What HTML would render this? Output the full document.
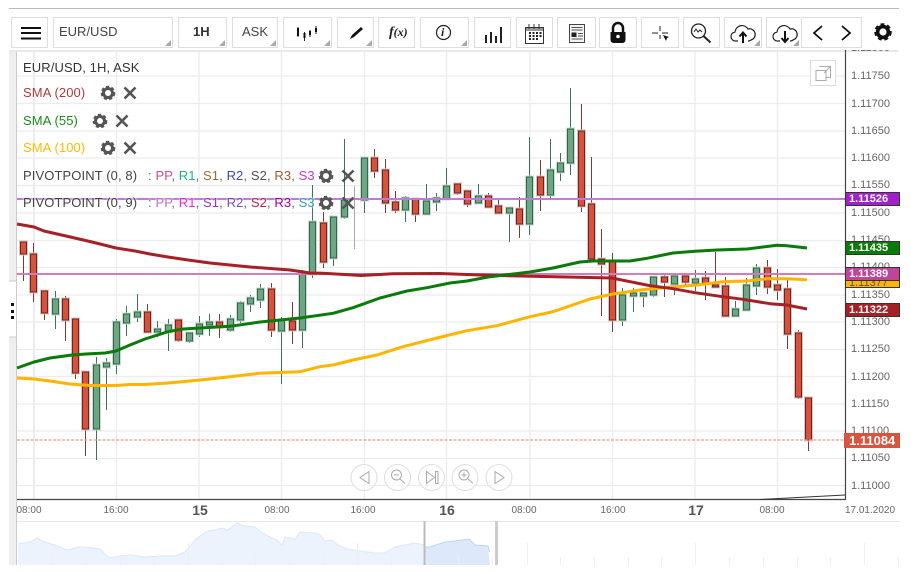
<!DOCTYPE html>
<html>
<head>
<meta charset="utf-8">
<style>
html,body{margin:0;padding:0;background:#fff;width:911px;height:571px;overflow:hidden}
body{position:relative;font-family:"Liberation Sans",sans-serif}
.b{position:absolute;top:17px;height:29px;border:1px solid #ddd;box-sizing:content-box;background:#fff}
.b.c:after{content:"";position:absolute;right:1px;bottom:1px;border-style:solid;border-width:0 0 6px 6px;border-color:transparent transparent #aaa transparent}
.t{position:absolute;white-space:nowrap}
.p{position:absolute;left:851px;font-size:11px;line-height:12px;color:#666;white-space:nowrap}
.x{position:absolute;top:505px;font-size:10px;line-height:12px;color:#666;white-space:nowrap;transform:translateX(-50%)}
.d{position:absolute;top:502px;font-size:14px;font-weight:bold;line-height:16px;color:#555;transform:translateX(-50%)}
.g{position:absolute;left:845px;width:53px;border:1px solid #333;color:#fff;font-size:11px;font-weight:bold;line-height:12px;height:12px;text-indent:3px}
.l{position:absolute;left:23px;font-size:13px;line-height:16px;letter-spacing:.1px;white-space:nowrap;color:#444;text-shadow:0 0 2px #fff,0 0 2px #fff}
.l i{font-style:normal;color:#666}
</style>
</head>
<body>
<div style="position:absolute;left:9px;top:8px;width:890px;height:1px;background:#bbb"></div>

<div class="b" style="left:11px;width:35px"><svg width="35" height="29" style="position:absolute;left:0;top:0"><path d="M9 10h20M9 15h20M9 20.500h20" stroke="#111" stroke-width="2" fill="none"/></svg></div>
<div class="b c" style="left:53px;width:118px"><span class="t" style="left:5px;top:6px;font-size:13px;line-height:16px;color:#444">EUR/USD</span></div>
<div class="b c" style="left:178px;width:47px"><span class="t" style="left:14px;top:6px;font-size:13px;font-weight:bold;line-height:16px;color:#333">1H</span></div>
<div class="b c" style="left:232px;width:44px"><span class="t" style="left:9px;top:6px;font-size:13px;line-height:16px;color:#444">ASK</span></div>
<div class="b c" style="left:283px;width:47px"><svg width="47" height="29" style="position:absolute;left:0;top:0"><path d="M14 9v10M20.500 14v9M26 12v7M32 8v8" stroke="#222" fill="none"/><path d="M13 10h2v8h-2zM19.500 15h2v5h-2zM25 13h2v4h-2zM31 10h2v4h-2z" fill="#111"/></svg></div>
<div class="b c" style="left:337px;width:35px"><svg width="35" height="29" style="position:absolute;left:0;top:0"><path d="M12 21l2-4 9-8 2 2-9 8z" fill="#111"/></svg></div>
<div class="b" style="left:378px;width:35px"><span class="t" style="left:10px;top:6px;font:italic bold 14px/16px 'Liberation Serif',serif;color:#222">f<span style="font-size:12px">(x)</span></span></div>
<div class="b c" style="left:420px;width:47px"><svg width="47" height="29" style="position:absolute;left:0;top:0"><circle cx="22.500" cy="14.500" r="7" fill="none" stroke="#222" stroke-width="1.200"/></svg><span class="t" style="left:20px;top:7px;font:italic bold 12px/14px 'Liberation Serif',serif;color:#222">i</span></div>
<div class="b" style="left:474px;width:35px"><svg width="35" height="29" style="position:absolute;left:0;top:0"><path d="M10 17h2v8h-2zM15 14h2v11h-2zM20 18h2v7h-2zM25 9h2v16h-2z" fill="#222"/></svg></div>
<div class="b" style="left:516px;width:35px"><svg width="35" height="29" style="position:absolute;left:0;top:0"><path d="M8.500 9.500h18v16h-18z" fill="none" stroke="#333"/><path d="M8.500 10h18v2h-18zM12 6v5M17 6v5M22 6v5" stroke="#333" fill="none"/><path d="M12 14h2v2h-2zM15.500 14h2v2h-2zM19 14h2v2h-2zM22.500 14h2v2h-2zM12 17h2v2h-2zM15.500 17h2v2h-2zM19 17h2v2h-2zM22.500 17h2v2h-2zM12 20h2v2h-2zM15.500 20h2v2h-2zM19 20h2v2h-2z" fill="#222"/></svg></div>
<div class="b" style="left:557px;width:37px"><svg width="37" height="29" style="position:absolute;left:0;top:0"><path d="M11.500 6.500h15v18h-15z" fill="#f4f4f4" stroke="#444"/><path d="M13.500 9.500h11M13.500 12h11M20 15.500h5M20 18h5M13.500 21h11" stroke="#555" fill="none"/><path d="M13.500 14.500h5v4.500h-5z" fill="#222"/></svg></div>
<div class="b" style="left:599px;width:36px"><svg width="36" height="29" style="position:absolute;left:0;top:0"><path d="M13 14v-4a5 5 0 0 1 10 0v4" fill="none" stroke="#111" stroke-width="2.500"/><path d="M10.500 14h15v8a3 3 0 0 1-3 3h-9a3 3 0 0 1-3-3z" fill="#111"/><circle cx="18" cy="18.500" r="1.800" fill="#fff"/></svg></div>
<div class="b" style="left:641px;width:36px"><svg width="36" height="29" style="position:absolute;left:0;top:0"><path d="M10 15h6M20 15h6M18 8v5M18 17v4" stroke="#222" fill="none"/><path d="M21 17l6 2-2 1-1 3z" fill="#111"/></svg></div>
<div class="b" style="left:683px;width:35px"><svg width="35" height="29" style="position:absolute;left:0;top:0"><circle cx="14.500" cy="13" r="7" fill="none" stroke="#222" stroke-width="1.300"/><path d="M19.500 18l7 6.500" stroke="#222" stroke-width="2" fill="none"/><path d="M10 14l2-3 2 3 2-2 2 2" stroke="#222" fill="none"/></svg></div>
<div class="b c" style="left:724px;width:36px"><svg width="36" height="29" style="position:absolute;left:0;top:0"><path d="M13 23h-2a4.500 4.500 0 0 1-1-9 7 7 0 0 1 13-3 5.500 5.500 0 0 1 3 11 4 4 0 0 1-3 1" fill="none" stroke="#222" stroke-width="1.200"/><path d="M18 25v-10M14.500 18.500l3.500-4 3.500 4" stroke="#111" stroke-width="2" fill="none"/></svg></div>
<div class="b c" style="left:766px;width:33px;border-right:0"><svg width="33" height="29" style="position:absolute;left:0;top:0"><path d="M13 23h-2a4.500 4.500 0 0 1-1-9 7 7 0 0 1 13-3 5.500 5.500 0 0 1 3 11 4 4 0 0 1-3 1" fill="none" stroke="#222" stroke-width="1.200"/><path d="M18 13v11M14.500 20l3.500 4 3.500-4" stroke="#111" stroke-width="2" fill="none"/></svg></div>
<div class="b" style="left:801px;width:29px"><svg width="29" height="29" style="position:absolute;left:0;top:0"><path d="M20 8l-8 7 8 7" stroke="#111" stroke-width="1.800" fill="none"/></svg></div>
<div class="b" style="left:831px;width:30px;border-left:0"><svg width="30" height="29" style="position:absolute;left:0;top:0"><path d="M11 8l8 7-8 7" stroke="#111" stroke-width="1.800" fill="none"/></svg></div>

<svg width="911" height="571" style="position:absolute;left:0;top:0">
<defs>
<g id="gear"><circle r="4.500" fill="none" stroke-width="3"/><circle r="6.200" fill="none" stroke-width="2.200" stroke-dasharray="3.100 2.310"/></g>
<path id="xx" d="M-5.500-5.500L5.500 5.500M5.500-5.500L-5.500 5.500" fill="none" stroke-width="2.600"/>
<path id="rb" d="M20.500 242H26.500V254H20.500ZM30.500 254H36.500V292H30.500ZM41.500 291H47.500V313H41.500ZM62.500 299H68.500V320H62.500ZM72.500 319H78.500V373H72.500ZM82.500 372H88.500V429H82.500ZM144.500 312H150.500V332H144.500ZM175.500 320H181.500V340H175.500ZM216.500 322H222.500V327H216.500ZM268.500 289H274.500V330H268.500ZM289.500 321H295.500V330H289.500ZM320.500 223H326.500V262H320.500ZM371.500 158H377.500V171H371.500ZM382.500 170H388.500V203H382.500ZM392.500 202H398.500V210H392.500ZM412.500 199H418.500V214H412.500ZM454.500 184H460.500V193H454.500ZM464.500 191H470.500V204H464.500ZM485.500 196H491.500V207H485.500ZM495.500 206H501.500V213H495.500ZM516.500 209H522.500V224H516.500ZM537.500 177H543.500V195H537.500ZM578.500 131H584.500V206H578.500ZM588.500 204H594.500V259H588.500ZM598.500 259H604.500V264H598.500ZM609.500 262H615.500V320H609.500ZM661.500 277H667.500V282H661.500ZM682.500 276H688.500V282H682.500ZM702.500 278H708.500V283H702.500ZM712.500 285H718.500V287H712.500ZM722.500 286H728.500V316H722.500ZM764.500 268H770.500V287H764.500ZM774.500 285H780.500V290H774.500ZM784.500 289H790.500V334H784.500ZM795.500 333H801.500V397H795.500ZM805.500 398H811.500V440H805.500Z"/>
<path id="gb" d="M52.500 299H58.500V314H52.500ZM93.500 365H99.500V429H93.500ZM103.500 363H109.500V367H103.500ZM113.500 322H119.500V364H113.500ZM123.500 314H129.500V323H123.500ZM134.500 312H140.500V317H134.500ZM154.500 329H160.500V332H154.500ZM165.500 325H171.500V332H165.500ZM186.500 333H192.500V341H186.500ZM196.500 324H202.500V334H196.500ZM206.500 322H212.500V325H206.500ZM227.500 319H233.500V330H227.500ZM237.500 303H243.500V320H237.500ZM247.500 298H253.500V304H247.500ZM257.500 289H263.500V300H257.500ZM278.500 320H284.500V331H278.500ZM299.500 274H305.500V330H299.500ZM309.500 222H315.500V274H309.500ZM330.500 217H336.500V258H330.500ZM341.500 200H347.500V217H341.500ZM361.500 158H367.500V200H361.500ZM402.500 198H408.500V210H402.500ZM423.500 201H429.500V214H423.500ZM433.500 198H439.500V202H433.500ZM443.500 186H449.500V199H443.500ZM475.500 196H481.500V203H475.500ZM506.500 208H512.500V213H506.500ZM526.500 177H532.500V224H526.500ZM547.500 170H553.500V195H547.500ZM557.500 163H563.500V172H557.500ZM567.500 129H573.500V163H567.500ZM619.500 295H625.500V320H619.500ZM630.500 293H636.500V296H630.500ZM640.500 293H646.500V296H640.500ZM650.500 277H656.500V295H650.500ZM671.500 276H677.500V284H671.500ZM692.500 279H698.500V283H692.500ZM732.500 309H738.500V316H732.500ZM743.500 285H749.500V310H743.500ZM753.500 268H759.500V286H753.500Z"/>
</defs>

<!-- left strip -->
<rect x="9" y="51" width="7" height="514" fill="#eee"/>
<rect x="16" y="51" width="1" height="514" fill="#ccc"/>
<rect x="9" y="281" width="7" height="56" fill="#fff"/>
<path d="M9.500 281h7M9.500 337h7" stroke="#ccc" fill="none"/>
<path d="M11 303h3v3h-3zM11 310h3v3h-3zM11 316h3v3h-3z" fill="#111"/>

<rect x="9" y="50" width="890" height="2" fill="#e9e9e9"/>

<!-- grid -->
<path d="M17 76H845M17 103.500H845M17 131H845M17 158H845M17 185.500H845M17 213H845M17 240.500H845M17 267.500H845M17 295H845M17 322H845M17 349.500H845M17 376.500H845M17 404H845M17 431H845M17 458.500H845M17 485.500H845" stroke="#ececec" stroke-width="1.300" fill="none"/>
<path d="M116.500 52V499M199 52V499M281.500 52V499M364.500 52V499M446.500 52V499M530 52V499M612.500 52V499M695 52V499M777.500 52V499" stroke="#ececec" stroke-width="1.300" fill="none"/>
<path d="M34 52V499" stroke="#e9edf3" stroke-width="2" fill="none"/>

<!-- wicks red -->
<path d="M23.500 242V281M33.500 243V302M44.500 290V320M65.500 296V341M75.500 319V379M85.500 372V456M147.500 304V332M178.500 320V342M219.500 314V338M271.500 283V337M292.500 302V344M323.500 212V268M374.500 149V178M385.500 159V213M395.500 191V213M415.500 199V222M457.500 183V195M467.500 191V207M488.500 193V207M498.500 198V213M519.500 197V238M540.500 160V211M581.500 104V212M591.500 157V259M601.500 229V316M612.500 253V332M664.500 275V297M685.500 276V285M705.500 271V300M715.500 252V287M725.500 277V316M767.500 260V294M777.500 269V300M787.500 280V349M798.500 330V399M808.500 398V451" stroke="#7d3a36" fill="none"/>
<!-- wicks green -->
<path d="M55.500 291V329M96.500 357V460M106.500 358V410M116.500 319V374M126.500 306V336M137.500 294V322M157.500 321V337M168.500 319V351M189.500 333V343M199.500 316V337M209.500 314V336M230.500 315V332M240.500 301V323M250.500 295V312M260.500 284V308M281.500 317V384M302.500 270V348M312.500 185V278M333.500 217V266M344.500 139V219M364.500 158V213M405.500 196V222M426.500 184V214M436.500 193V211M446.500 168V199M478.500 184V203M509.500 208V242M529.500 137V235M550.500 139V198M560.500 153V181M570.500 88V175M622.500 288V326M633.500 288V312M643.500 292V307M653.500 277V297M674.500 273V295M695.500 270V291M735.500 301V316M746.500 278V310M756.500 264V295" stroke="#3f7158" fill="none"/>
<path d="M354.500 186V249" stroke="#aaa" fill="none"/>
<!-- bodies -->
<use href="#rb" fill="none" stroke="#d9c3bf" stroke-width="3"/>
<use href="#gb" fill="none" stroke="#c8dccf" stroke-width="3"/>
<use href="#rb" fill="#d4523e" stroke="#6f2420" stroke-width="1"/>
<use href="#gb" fill="#6ea585" stroke="#33664a" stroke-width="1"/>

<!-- pivot / price lines -->
<rect x="17" y="273" width="828" height="2" fill="#d07fb5"/>
<rect x="17" y="198" width="828" height="2" fill="#c278dc"/>
<path d="M17 440H845" stroke="#ef9a8c" stroke-width="1.300" stroke-dasharray="3 1.500" fill="none"/>

<!-- SMA lines -->
<polyline fill="none" stroke="#ffb400" stroke-width="3" stroke-linejoin="round" points="17,378 34,379 50,381 70,384 90,385.500 116,385.500 130,384.500 145,384.500 168,383 190,381 210,379 230,376.700 260,373.300 300,371.700 320,366.700 333,365 353,360 377,355 403,346.700 437,338 467,330.700 497,325.700 530,316.700 553,311.700 590,299 613,294 640,290 663,287.700 697,285 723,281.700 747,281 767,278.700 787,278.700 807,279.700"/>
<polyline fill="none" stroke="#a52126" stroke-width="3" stroke-linejoin="round" points="17,224 34,227 44,231 66,236 92,242 116,248 135,251 150,254 168,257 188,260 210,263 230,265 250,267 290,270 310,273 323,273.300 353,275 361,275.500 393,273.700 440,273.500 480,275 520,276 579,277.300 612,278 630,281.700 650,285.700 673,288.700 695,292.700 720,296.300 743,299.300 770,303.700 787,305 807,309"/>
<polyline fill="none" stroke="#0a7a0a" stroke-width="3" stroke-linejoin="round" points="17,368 34,362 50,358 72,355 86,354 105,353 116,351 130,345 145,339 168,331.700 183,329 230,326.300 260,322 300,318 333,313.300 353,307.700 380,298 407,291 427,287.700 450,283 467,281 490,276.700 530,272 553,268 580,262 593,261 630,261 647,258.300 673,253 695,251.300 717,250 747,249 777,245.300 787,245.700 807,248"/>

<!-- axes -->
<path d="M845.500 50V499.500H17" fill="none" stroke="#444" stroke-width="1.200"/>
<path d="M760 499.500L845 495" fill="none" stroke="#333" stroke-width="1"/>
<path d="M17 521.500H900" stroke="#e8e8e8" fill="none"/>

<!-- expand icon -->
<rect x="810.500" y="60.500" width="25" height="25" fill="#fff" stroke="#ddd"/>
<path d="M819.500 66.500h11v11h-4M816 70.500h10v10h-10zM824 73l6-6M826 66.500h4.500v4.500" fill="none" stroke="#aaa"/>

<!-- nav buttons -->
<g fill="#fff" fill-opacity=".6" stroke="#ddd">
<circle cx="364" cy="477.500" r="13"/><circle cx="397.500" cy="477.500" r="13"/><circle cx="431.500" cy="477.500" r="13"/><circle cx="465" cy="477.500" r="13"/><circle cx="499" cy="477.500" r="13"/>
</g>
<g fill="none" stroke="#aaa">
<path d="M369 471.500v12l-9-6z"/>
<circle cx="396.500" cy="475" r="5"/><path d="M394 475h5M400 479l5 4.500"/>
<path d="M426.500 471.500v12l8-6zM435.500 471.500v12h2.500v-12z"/>
<circle cx="464" cy="475" r="5"/><path d="M461.500 475h5M464 472.500v5M468 479l5 4.500"/>
<path d="M495 471.500v12l9-6z"/>
</g>

<!-- navigator -->
<path d="M18 565V544L25 543 32 541 37 538 42 541 48 543 55 545 62 548 68 550 78 547 85 547 92 548 100 549 106 555 110 558 120 556 130 555 145 557 160 556 175 556 185 552 195 540 207 531 215 530 222 528 228 530 237 523 245 526 255 527 262 533 272 538 277 540 282 545 285 537 295 539 300 532 315 533 320 535 325 541 332 540 338 545 347 549 360 551 375 553 385 553 395 547 405 545 415 543 424 545V565Z" fill="#edf3fc" stroke="none"/>
<path d="M18 544L25 543 32 541 37 538 42 541 48 543 55 545 62 548 68 550 78 547 85 547 92 548 100 549 106 555 110 558 120 556 130 555 145 557 160 556 175 556 185 552 195 540 207 531 215 530 222 528 228 530 237 523 245 526 255 527 262 533 272 538 277 540 282 545 285 537 295 539 300 532 315 533 320 535 325 541 332 540 338 545 347 549 360 551 375 553 385 553 395 547 405 545 415 543 424 545" fill="none" stroke="#dbe7f9"/>
<path d="M424 565V547L430 547 445 542 455 541 469 539 475 545 488 546 490 565Z" fill="#dde9fb"/>
<path d="M424 547L430 547 445 542 455 541 469 539 475 545 488 546 489.500 552" fill="none" stroke="#bcd3f7"/>
<path d="M52.500 557V565M86.500 557V565M120.500 557V565M154.500 557V565M222.500 557V565M255.500 557V565M289.500 557V565M323.500 557V565M391.500 557V565M458.500 557V565M492.500 557V565M560.500 557V565M594.500 557V565M628.500 557V565M661.500 557V565M729.500 557V565M763.500 557V565M797.500 557V565M830.500 557V565M898.500 557V565" stroke="#eee" fill="none"/>
<path d="M188.500 543V565M357.500 543V565M527.500 543V565M695.500 543V565M864.500 543V565" stroke="#eee" fill="none"/>
<rect x="423.500" y="521" width="2" height="44" fill="#bbb"/>
<rect x="495" y="521" width="3" height="44" fill="#ccc"/>
</svg>

<!-- price axis -->
<div style="position:absolute;left:846px;top:50px;width:54px;height:3px;overflow:hidden"><div class="p" style="left:5px;top:-8px">1.11800</div></div>
<div class="p" style="top:70px">1.11750</div>
<div class="p" style="top:98px">1.11700</div>
<div class="p" style="top:125px">1.11650</div>
<div class="p" style="top:152px">1.11600</div>
<div class="p" style="top:179px">1.11550</div>
<div class="p" style="top:207px">1.11500</div>
<div class="p" style="top:234px">1.11450</div>
<div class="p" style="top:261px">1.11400</div>
<div class="p" style="top:289px">1.11350</div>
<div class="p" style="top:316px">1.11300</div>
<div class="p" style="top:343px">1.11250</div>
<div class="p" style="top:371px">1.11200</div>
<div class="p" style="top:398px">1.11150</div>
<div class="p" style="top:425px">1.11100</div>
<div class="p" style="top:452px">1.11050</div>
<div class="p" style="top:480px">1.11000</div>

<div class="g" style="top:192px;background:#a21fc9">1.11526</div>
<div class="g" style="top:241px;background:#0a7a0a">1.11435</div>
<div class="g" style="top:279px;height:7px;background:#ffb400;color:#555;overflow:hidden;line-height:6px;font-weight:normal">1.11377</div>
<div class="g" style="top:267px;background:#c0459a">1.11389</div>
<div class="g" style="top:303px;background:#a52126">1.11322</div>
<div style="position:absolute;left:844px;top:433px;width:56px;height:15px;background:#d9533f;color:#fff;font-size:13px;font-weight:bold;line-height:15px;text-indent:5px">1.11084</div>

<!-- time axis -->
<div style="position:absolute;left:17px;top:500px;width:30px;height:20px;overflow:hidden"><div class="x" style="left:12px;top:5px">08:00</div></div>
<div class="x" style="left:116px">16:00</div>
<div class="d" style="left:200px">15</div>
<div class="x" style="left:277px">08:00</div>
<div class="x" style="left:363px">16:00</div>
<div class="d" style="left:447px">16</div>
<div class="x" style="left:524px">08:00</div>
<div class="x" style="left:613px">16:00</div>
<div class="d" style="left:696px">17</div>
<div class="x" style="left:772px">08:00</div>
<div class="x" style="left:870px">17.01.2020</div>

<!-- legend -->
<div class="l" style="top:60px;color:#333">EUR/USD, 1H, ASK</div>
<div class="l" style="top:85px;color:#b03a3a">SMA (200)</div>
<div class="l" style="top:113px;color:#1a8a1a">SMA (55)</div>
<div class="l" style="top:140px;color:#ffb900">SMA (100)</div>
<div class="l" style="top:168px">PIVOTPOINT (0, 8)</div>
<div class="l" style="top:195px">PIVOTPOINT (0, 9)</div>
<div class="l" style="top:168px;left:148px"><i>:</i> <span style="color:#c8509a">PP</span><i>,</i> <span style="color:#1db46e">R1</span><i>,</i> <span style="color:#94703a">S1</span><i>,</i> <span style="color:#3a4ab0">R2</span><i>,</i> <span style="color:#5a4a5a">S2</span><i>,</i> <span style="color:#96602a">R3</span><i>,</i> <span style="color:#c83ac8">S3</span></div>
<div class="l" style="top:195px;left:148px"><i>:</i> <span style="color:#c070d0">PP</span><i>,</i> <span style="color:#f020f0">R1</span><i>,</i> <span style="color:#a030c0">S1</span><i>,</i> <span style="color:#7050d0">R2</span><i>,</i> <span style="color:#c02050">S2</span><i>,</i> <span style="color:#a000a0">R3</span><i>,</i> <span style="color:#30a0c0">S3</span></div>

<svg width="911" height="571" style="position:absolute;left:0;top:0">
<use href="#gear" x="108" y="93" stroke="#555"/><use href="#xx" x="130" y="93" stroke="#555"/>
<use href="#gear" x="100" y="121" stroke="#555"/><use href="#xx" x="122" y="121" stroke="#555"/>
<use href="#gear" x="108" y="148" stroke="#555"/><use href="#xx" x="130" y="148" stroke="#555"/>
<use href="#gear" x="326" y="176" stroke="#555"/><use href="#xx" x="348" y="176" stroke="#555"/>
<use href="#gear" x="326" y="203" stroke="#555"/><use href="#xx" x="348" y="203" stroke="#555"/>
<use href="#gear" transform="translate(883 32) scale(1.2)" stroke="#111"/>
</svg>
</body>
</html>
